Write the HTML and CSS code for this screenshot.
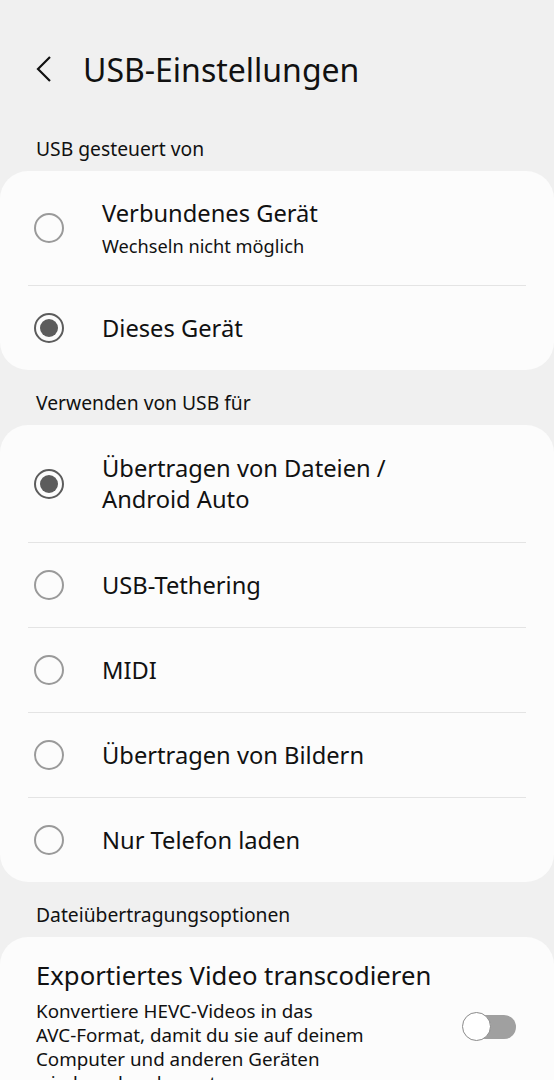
FILE: index.html
```html
<!DOCTYPE html>
<html lang="de">
<head>
    <meta charset="UTF-8">
    <meta name="viewport" content="width=device-width, initial-scale=1.0">
    <title>USB-Einstellungen</title>
    <link rel="stylesheet" href="styles.css">
</head>
<body>
    <div class="screen">
        <header class="app-bar">
            <svg class="back" width="20" height="28" viewBox="0 0 20 28">
                <path d="M15 2 L3 14 L15 26" fill="none" stroke="#111" stroke-width="2.2"/>
            </svg>
            <h1>USB-Einstellungen</h1>
        </header>

        <div class="section-label">USB gesteuert von</div>
        <div class="card">
            <div class="row">
                <span class="radio"></span>
                <div class="text">
                    <div class="title">Verbundenes Gerät</div>
                    <div class="sub">Wechseln nicht möglich</div>
                </div>
            </div>
            <div class="row">
                <span class="radio checked"></span>
                <div class="text">
                    <div class="title">Dieses Gerät</div>
                </div>
            </div>
        </div>

        <div class="section-label">Verwenden von USB für</div>
        <div class="card">
            <div class="row tall">
                <span class="radio checked"></span>
                <div class="text">
                    <div class="title">Übertragen von Dateien /<br>Android Auto</div>
                </div>
            </div>
            <div class="row">
                <span class="radio"></span>
                <div class="text"><div class="title">USB-Tethering</div></div>
            </div>
            <div class="row">
                <span class="radio"></span>
                <div class="text"><div class="title">MIDI</div></div>
            </div>
            <div class="row">
                <span class="radio"></span>
                <div class="text"><div class="title">Übertragen von Bildern</div></div>
            </div>
            <div class="row">
                <span class="radio"></span>
                <div class="text"><div class="title">Nur Telefon laden</div></div>
            </div>
        </div>

        <div class="section-label">Dateiübertragungsoptionen</div>
        <div class="card switch-card">
            <div class="switch-title">Exportiertes Video transcodieren</div>
            <div class="switch-body">
                <div class="desc">Konvertiere HEVC-Videos in das <span class="nowrap">AVC-Format,</span> damit du sie auf deinem Computer und anderen Geräten wiedergeben kannst.</div>
                <span class="toggle"><span class="knob"></span></span>
            </div>
        </div>
    </div>
</body>
</html>
```

FILE: styles.css
```css
body {
    margin: 0;
    padding: 0;
    background-color: #f0f0f0;
    font-family: "Noto Sans", sans-serif;
    color: #111;
}

.screen {
    width: 554px;
    height: 1080px;
    overflow: hidden;
}

.app-bar {
    display: flex;
    align-items: center;
    height: 50px;
    padding: 44px 0 0 35px;
}

.app-bar .back {
    margin-right: 28px;
}

.app-bar h1 {
    margin: 0;
    font-size: 32px;
    font-weight: 400;
}

.section-label {
    padding: 0 36px;
    font-size: 19.3px;
    line-height: 26px;
    margin: 20px 0 9px;
}

.app-bar + .section-label {
    margin-top: 42px;
}

.card {
    background-color: #fcfcfc;
    border-radius: 28px;
}

.row {
    display: flex;
    align-items: center;
    min-height: 84px;
    margin: 0 28px;
    border-top: 1px solid #e4e4e4;
}

.row:first-child {
    border-top: none;
}

.card .row:first-child {
    min-height: 114px;
}

.card .row.tall {
    min-height: 117px;
}

.radio {
    width: 26px;
    height: 26px;
    border: 2px solid #9a9a9a;
    border-radius: 50%;
    margin-left: 6px;
    flex-shrink: 0;
    position: relative;
    box-sizing: content-box;
}

.radio.checked {
    border-color: #5c5c5c;
}

.radio.checked::after {
    content: "";
    position: absolute;
    left: 4px;
    top: 4px;
    width: 18px;
    height: 18px;
    border-radius: 50%;
    background-color: #5c5c5c;
}

.text {
    margin-left: 38px;
}

.title {
    font-size: 23.7px;
    line-height: 31px;
}

.sub {
    font-size: 18.2px;
    line-height: 26px;
    margin-top: 4px;
}

.switch-card {
    padding: 22px 38px 0 36px;
    height: 200px;
}

.switch-title {
    font-size: 25.7px;
    line-height: 34px;
}

.switch-body {
    display: flex;
    align-items: flex-start;
}

.desc {
    width: 350px;
    margin-top: 6px;
    font-size: 18.8px;
    line-height: 24px;
}

.nowrap {
    white-space: nowrap;
}

.toggle {
    position: relative;
    width: 46px;
    height: 24px;
    border-radius: 12px;
    background-color: #a0a0a0;
    margin: 22px 0 0 auto;
}

.toggle .knob {
    position: absolute;
    left: -8px;
    top: -3px;
    width: 27px;
    height: 27px;
    border: 1.5px solid #8a8a8a;
    border-radius: 50%;
    background-color: #fff;
}
```
